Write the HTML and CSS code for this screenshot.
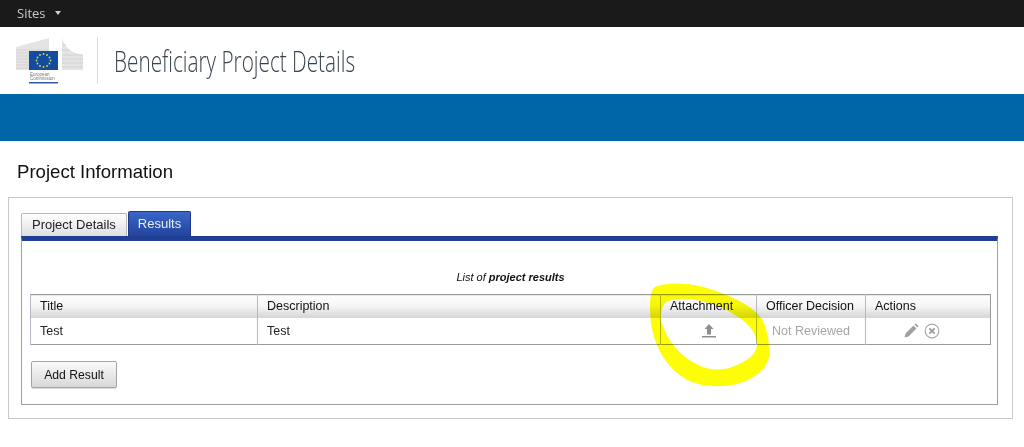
FILE: index.html
```html
<!DOCTYPE html>
<html lang="en">
<head>
<meta charset="utf-8">
<title>Beneficiary Project Details</title>
<link rel="stylesheet" href="styles.css">
</head>
<body>
<div class="topbar"><span class="sites">Sites</span><span class="caret"></span></div>
<header class="masthead">
  <svg class="logo" width="70" height="48" viewBox="0 0 70 48" aria-hidden="true">
    <path d="M1 10 L34 1 L34 33 L1 33Z" fill="#e4e4e4"/>
    <path d="M1 13H34M1 16H34M1 19H34M1 22H34M1 25H34M1 28H34M1 31H34" stroke="#d2d2d2" stroke-width="1"/>
    <path d="M47 1 C50 12 58 16 68 18 V33 H47Z" fill="#e4e4e4"/>
    <path d="M47 8H51M47 13H55M47 18H68M47 22H68M47 26H68M47 30H68" stroke="#d2d2d2" stroke-width="1"/>
    <rect x="14" y="14" width="29" height="19" fill="#134c9e"/>
    <g fill="#e8d32a">
      <circle cx="28.500" cy="17" r="0.900"/><circle cx="32" cy="18" r="0.900"/><circle cx="34.500" cy="20.500" r="0.900"/><circle cx="35.500" cy="23.500" r="0.900"/><circle cx="34.500" cy="26.500" r="0.900"/><circle cx="32" cy="29" r="0.900"/><circle cx="28.500" cy="30" r="0.900"/><circle cx="25" cy="29" r="0.900"/><circle cx="22.500" cy="26.500" r="0.900"/><circle cx="21.500" cy="23.500" r="0.900"/><circle cx="22.500" cy="20.500" r="0.900"/><circle cx="25" cy="18" r="0.900"/>
    </g>
    <text class="logo-text" x="15" y="39">European</text>
    <text class="logo-text" x="15" y="43">Commission</text>
    <rect x="14" y="45" width="29" height="1.500" fill="#2f5aa8"/>
  </svg>
  <div class="divider"></div>
  <h1 class="site-title">Beneficiary Project Details</h1>
</header>
<div class="band"></div>
<main class="content">
  <h2 class="page-title">Project Information</h2>
  <section class="outer">
    <nav class="tabs">
      <a class="tab">Project Details</a>
      <a class="tab active">Results</a>
    </nav>
    <div class="panel">
      <p class="caption">List of <b>project results</b></p>
      <table class="grid">
        <colgroup><col class="c1"><col class="c2"><col class="c3"><col class="c4"><col class="c5"></colgroup>
        <thead>
          <tr><th>Title</th><th>Description</th><th>Attachment</th><th>Officer Decision</th><th>Actions</th></tr>
        </thead>
        <tbody>
          <tr>
            <td>Test</td>
            <td>Test</td>
            <td class="center">
              <svg class="icon" width="14" height="14" viewBox="0 0 14 14" aria-hidden="true"><path d="M7 0 L11.500 5 H9 V10.500 H5 V5 H2.500Z M0 12 H14 V13.500 H0Z" fill="#8f8f8f"/></svg>
            </td>
            <td class="center muted">Not Reviewed</td>
            <td class="center actions">
              <svg class="icon" width="15" height="15" viewBox="0 0 15 15" aria-hidden="true"><path d="M0.500 14.500 L1.500 10.500 L9.500 2.500 L12.500 5.500 L4.500 13.500Z M10.500 1.500 L12 0.500 L14.500 3 L13.500 4.500Z" fill="#a0a0a0"/></svg>
              <svg class="icon" width="16" height="16" viewBox="0 0 16 16" aria-hidden="true"><circle cx="8" cy="8" r="6.800" fill="none" stroke="#aaa" stroke-width="1.200"/><path d="M5.300 5.300 L10.700 10.700 M10.700 5.300 L5.300 10.700" stroke="#9a9a9a" stroke-width="1.800"/></svg>
            </td>
          </tr>
        </tbody>
      </table>
      <button class="btn" type="button">Add Result</button>
    </div>
  </section>
</main>
<svg class="highlight" width="1024" height="447" viewBox="0 0 1024 447" aria-hidden="true">
  <path fill="#fdfd08" fill-rule="evenodd" d="M655 287 Q660 284 674 283.500 Q688 283 701.500 286.500 Q715 290 730 296.500 Q745 303 754 310.500 Q763 318 766 329 Q769 340 769.500 350 Q770 360 764 367.500 Q758 375 748 380 Q738 385 723 386 Q708 387 696.500 383.500 Q685 380 676.500 372.500 Q668 365 662.500 356 Q657 347 653.500 335 Q650 323 650 306.500 Q650 290 655 287Z M661.500 311 Q663 305 665.500 302.500 Q668 300 678 299 Q688 298 700 300.500 Q712 303 722.500 308 Q733 313 741 319 Q749 325 753 331.500 Q757 338 757 344 Q757 350 752.500 355 Q748 360 737 365 Q726 370 715.500 369.500 Q705 369 694.500 363 Q684 357 677.500 350 Q671 343 667.500 336.500 Q664 330 662 323.500 Q660 317 661.500 311Z"/>
</svg>
</body>
</html>
```
FILE: styles.css
```css
html, body { margin: 0; padding: 0; }
body {
  width: 1024px;
  height: 447px;
  overflow: hidden;
  background: #fff;
  font-family: "Liberation Sans", Arial, sans-serif;
  font-size: 12px;
  color: #222;
}
.topbar {
  height: 27px;
  background: #1a1a1a;
  display: flex;
  align-items: center;
  padding-left: 17px;
  box-sizing: border-box;
}
.sites {
  font-family: "Open Sans", sans-serif;
  font-size: 13px;
  color: #c8c8c8;
  position: relative;
  top: -1px;
}
.caret {
  margin-left: 9px;
  margin-top: -2px;
  border-left: 3px solid transparent;
  border-right: 3px solid transparent;
  border-top: 4px solid #d0d0d0;
}
.masthead {
  height: 67px;
  display: flex;
  align-items: flex-start;
  box-sizing: border-box;
  padding: 10px 0 0 15px;
}
.logo { display: block; flex: none; }
.logo-text {
  font-family: "Liberation Sans", sans-serif;
  font-size: 4.500px;
  fill: #777;
}
.divider {
  width: 1px;
  height: 47px;
  background: #dcdcdc;
  margin-left: 12px;
}
.site-title {
  margin: 6px 0 0 16px;
  font-family: "Open Sans", sans-serif;
  font-weight: 300;
  font-size: 29.500px;
  line-height: 36px;
  color: #3a444c;
  transform: scaleX(0.703);
  transform-origin: left center;
  white-space: nowrap;
}
.band { height: 47px; background: #0066a8; }
.content { padding: 0 11px 0 8px; }
.page-title {
  margin: 21px 0 15px 9px;
  font-size: 18.600px;
  line-height: 20px;
  font-weight: 400;
  color: #111;
}
.outer {
  height: 222px;
  box-sizing: border-box;
  border: 1px solid #c9c9c9;
  padding: 13px 14px 13px 12px;
}
.tabs {
  display: flex;
  align-items: flex-end;
  gap: 1px;
  height: 25px;
}
.tab {
  box-sizing: border-box;
  height: 23px;
  line-height: 21px;
  padding: 0 10px;
  font-size: 13px;
  color: #222;
  background: linear-gradient(#fff, #dedede);
  border: 1px solid #b9b9b9;
  border-bottom: 0;
  border-radius: 2px 2px 0 0;
}
.tab.active {
  height: 25px;
  line-height: 24px;
  padding: 0 9px;
  color: #e8edfa;
  background: linear-gradient(#3a66c8, #23449c);
  border: 1px solid #1d3a8a;
  border-bottom: 0;
}
.panel {
  box-sizing: border-box;
  height: 169px;
  border: 1px solid #a0a0a0;
  border-top: 5px solid #1f3f94;
  padding: 30px 6px 0 8px;
}
.caption {
  margin: 0 0 10px;
  text-align: center;
  font-size: 11px;
  line-height: 13px;
  font-style: italic;
  color: #111;
}
.caption b { font-weight: 700; }
.grid {
  width: 960px;
  table-layout: fixed;
  border-collapse: collapse;
  border: 1px solid #9a9a9a;
}
.c1 { width: 227px; }
.c2 { width: 403px; }
.c3 { width: 96px; }
.c4 { width: 109px; }
.c5 { width: 125px; }
.grid th {
  height: 23px;
  padding: 0 9px;
  box-sizing: border-box;
  text-align: left;
  font-weight: 400;
  font-size: 12.500px;
  color: #111;
  background: linear-gradient(#fdfdfd, #f6f6f6 45%, #d4d4d4);
  border-left: 1px solid #b4b8c4;
}
.grid td {
  height: 27px;
  padding: 0 9px;
  box-sizing: border-box;
  font-size: 12.500px;
  color: #222;
  border-left: 1px solid #b4b8c4;
}
.grid td.center { text-align: center; padding: 0; }
.grid td.muted { color: #a6a6a6; }
.grid td.actions { padding-right: 12px; font-size: 0; }
.icon { display: inline-block; vertical-align: middle; }
.actions .icon + .icon { margin-left: 5px; }
.btn {
  display: block;
  margin: 16px 0 0 1px;
  width: 86px;
  height: 27px;
  padding: 0;
  font-family: inherit;
  font-size: 12.200px;
  color: #111;
  background: linear-gradient(#fafafa, #d8d8d8);
  border: 1px solid #a4a4a4;
  border-radius: 2px;
  box-shadow: 0 1px 1px rgba(0,0,0,.15);
}
.highlight {
  position: absolute;
  left: 0;
  top: 0;
  mix-blend-mode: multiply;
  pointer-events: none;
}
```
